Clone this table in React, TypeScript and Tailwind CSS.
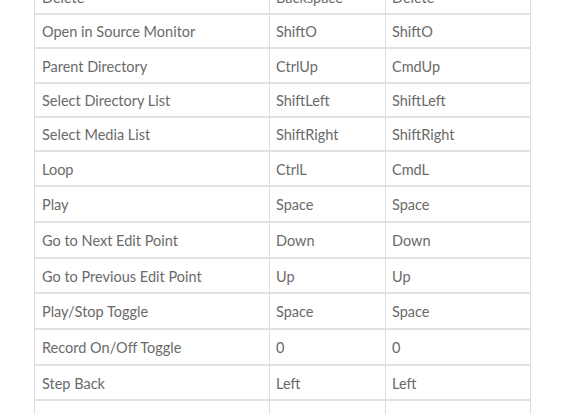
import React from "react";

const rows: [string, string, string, number][] = [
  ["Delete", "Backspace", "Delete", 35],
  ["Open in Source Monitor", "ShiftO", "ShiftO", 34],
  ["Parent Directory", "CtrlUp", "CmdUp", 35],
  ["Select Directory List", "ShiftLeft", "ShiftLeft", 34],
  ["Select Media List", "ShiftRight", "ShiftRight", 34],
  ["Loop", "CtrlL", "CmdL", 35],
  ["Play", "Space", "Space", 36],
  ["Go to Next Edit Point", "Down", "Down", 36],
  ["Go to Previous Edit Point", "Up", "Up", 35],
  ["Play/Stop Toggle", "Space", "Space", 36],
  ["Record On/Off Toggle", "0", "0", 36],
  ["Step Back", "Left", "Left", 35],
  ["", "", "", 36],
];

export default function App() {
  return (
    <div className="w-[567px] h-[414px] overflow-hidden bg-white" style={{ fontFamily: "Lato, 'Open Sans', sans-serif" }}>
      <div className="ml-[34px] mt-[-20px] w-[497px] border-l border-r border-[#dcdcdc]">
        {rows.map(([a, b, c, h], i) => (
          <div
            key={i}
            className="grid grid-cols-[235px_116px_1fr] border-b-2 border-[#e2e2e2] text-[14.5px] text-[#6a6a6a]"
            style={{ height: h }}
          >
            <div className="flex items-center pl-[7px] pt-[2px] border-r border-[#dcdcdc]">{a}</div>
            <div className="flex items-center pl-[6px] pt-[2px] border-r border-[#dcdcdc]">{b}</div>
            <div className="flex items-center pl-[6px] pt-[2px]">{c}</div>
          </div>
        ))}
      </div>
    </div>
  );
}
